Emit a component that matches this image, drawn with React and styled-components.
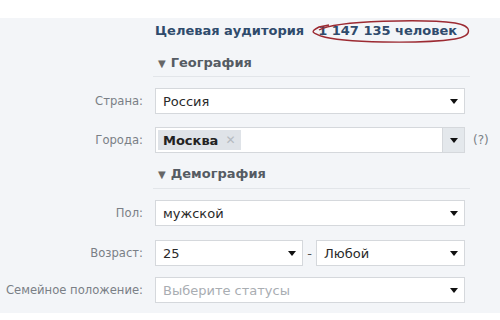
import styled, { createGlobalStyle } from "styled-components";

const GlobalStyle = createGlobalStyle`
  body {
    margin: 0;
    background: #ffffff;
    font-family: "DejaVu Sans", Tahoma, sans-serif;
  }
`;

const Page = styled.div`
  width: 500px;
  height: 320px;
  padding-top: 18px;
  box-sizing: border-box;
`;

const Panel = styled.div`
  background: #f3f5f8;
  padding-bottom: 10px;
`;

const Title = styled.div`
  position: relative;
  margin-left: 155px;
  padding-top: 4px;
  line-height: 18px;
  font-size: 13px;
  font-weight: bold;
  color: #2f4b6c;
  white-space: nowrap;
`;

const Count = styled.span`
  margin-left: 14px;
`;

const Ellipse = styled.svg`
  position: absolute;
  left: 152px;
  top: 0;
  width: 164px;
  height: 26px;
  overflow: visible;
`;

const SectionHeader = styled.div`
  margin-left: 153px;
  width: 317px;
  padding: ${(p) => p.$top}px 0 ${(p) => p.$bottom}px 5px;
  line-height: 18px;
  font-size: 13px;
  font-weight: bold;
  color: #555b63;
  border-bottom: 1px solid #e2e5e9;
  margin-bottom: 11px;
  box-sizing: border-box;
`;

const Caret = styled.span`
  font-size: 10px;
  margin-right: 5px;
  color: #666;
`;

const Row = styled.div`
  display: grid;
  grid-template-columns: 143px 310px auto;
  column-gap: 12px;
  align-items: center;
  margin-bottom: ${(p) => p.$gap || 0}px;
`;

const Label = styled.div`
  text-align: right;
  font-size: 11.6px;
  color: #7a7f86;
  white-space: nowrap;
`;

const Pair = styled.div`
  display: flex;
  align-items: center;
`;

const Dash = styled.span`
  width: 13px;
  text-align: center;
  font-size: 13px;
  color: #555;
`;

const Select = styled.div`
  display: flex;
  align-items: center;
  height: 26px;
  width: ${(p) => p.$width || 310}px;
  box-sizing: border-box;
  background: #fff;
  border: 1px solid #d5d8dc;
  padding-left: ${(p) => (p.$tokens ? 2 : 7)}px;
  font-size: 13px;
  color: ${(p) => (p.$placeholder ? "#a9adb2" : "#2a2a2a")};
`;

const Value = styled.span`
  flex: 1;
  white-space: nowrap;
`;

const Arrow = styled.div`
  width: 21px;
  align-self: stretch;
  display: flex;
  align-items: center;
  justify-content: center;
  background: ${(p) => (p.$boxed ? "#e4e8ec" : "transparent")};
  border-left: 1px solid ${(p) => (p.$boxed ? "#d5d8dc" : "transparent")};
  &::after {
    content: "";
    border-left: 4px solid transparent;
    border-right: 4px solid transparent;
    border-top: 5px solid #111;
  }
`;

const Token = styled.span`
  display: inline-flex;
  align-items: center;
  height: 20px;
  padding: 0 6px 0 5px;
  background: #dfe3e8;
  font-weight: bold;
  font-size: 13px;
  color: #222;
`;

const TokenClose = styled.span`
  margin-left: 7px;
  font-weight: normal;
  color: #b5bac0;
  font-size: 12px;
`;

const Help = styled.span`
  margin-left: -4px;
  font-size: 12px;
  color: #7a7f86;
`;

export default function App() {
  return (
    <Page>
      <GlobalStyle />
      <Panel>
        <Title>
          Целевая аудитория
          <Count>1 147 135 человек</Count>
          <Ellipse viewBox="0 0 164 26">
            <path
              d="M12 12 C 30 2, 120 1, 148 5 C 166 8, 166 18, 148 21 C 114 26, 35 25, 14 18 C 6 15, 2 14, 12 9 L 22 7"
              fill="none"
              stroke="#9c2a32"
              strokeWidth="1.4"
            />
          </Ellipse>
        </Title>

        <SectionHeader $top={14} $bottom={3}>
          <Caret>▼</Caret>География
        </SectionHeader>
        <Row $gap={13}>
          <Label>Страна:</Label>
          <Select>
            <Value>Россия</Value>
            <Arrow />
          </Select>
        </Row>
        <Row>
          <Label>Города:</Label>
          <Select $tokens>
            <Value>
              <Token>
                Москва<TokenClose>✕</TokenClose>
              </Token>
            </Value>
            <Arrow $boxed />
          </Select>
          <Help>(?)</Help>
        </Row>

        <SectionHeader $top={12} $bottom={4}>
          <Caret>▼</Caret>Демография
        </SectionHeader>
        <Row $gap={14}>
          <Label>Пол:</Label>
          <Select>
            <Value>мужской</Value>
            <Arrow />
          </Select>
        </Row>
        <Row $gap={11}>
          <Label>Возраст:</Label>
          <Pair>
            <Select $width={148}>
              <Value>25</Value>
              <Arrow />
            </Select>
            <Dash>-</Dash>
            <Select $width={149}>
              <Value>Любой</Value>
              <Arrow />
            </Select>
          </Pair>
        </Row>
        <Row>
          <Label>Семейное положение:</Label>
          <Select $placeholder>
            <Value>Выберите статусы</Value>
            <Arrow />
          </Select>
        </Row>
      </Panel>
    </Page>
  );
}
